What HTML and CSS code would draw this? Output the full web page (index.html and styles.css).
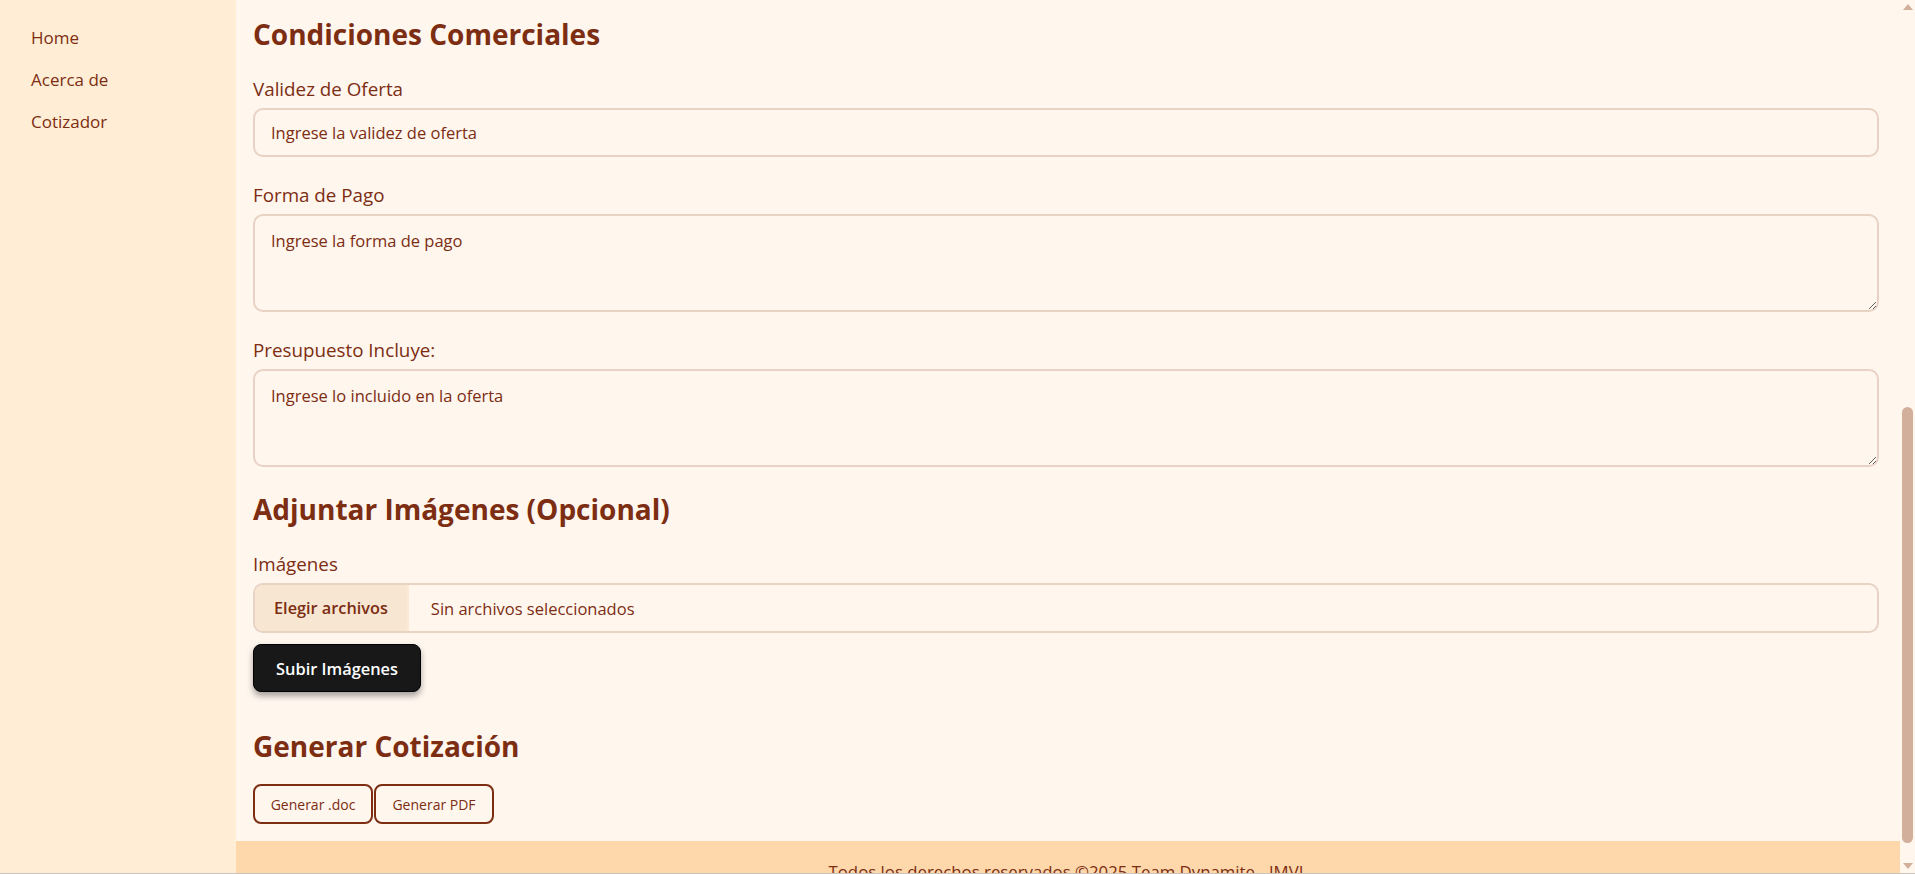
FILE: index.html
```html
<!DOCTYPE html>
<html lang="es">
<head>
<meta charset="utf-8">
<title>Cotizador</title>
<link rel="stylesheet" href="styles.css">
</head>
<body>
<div class="layout">
  <aside class="sidebar">
    <nav class="nav">
      <a class="nav-link" href="#">Home</a>
      <a class="nav-link" href="#">Acerca de</a>
      <a class="nav-link" href="#">Cotizador</a>
    </nav>
  </aside>
  <div class="page">
    <main class="main">
      <h2 class="section-title">Condiciones Comerciales</h2>
      <div class="field">
        <label class="field-label" for="validez">Validez de Oferta</label>
        <input class="input" id="validez" type="text" placeholder="Ingrese la validez de oferta">
      </div>
      <div class="field">
        <label class="field-label" for="pago">Forma de Pago</label>
        <textarea class="input textarea" id="pago" placeholder="Ingrese la forma de pago"></textarea>
      </div>
      <div class="field">
        <label class="field-label" for="incluye">Presupuesto Incluye:</label>
        <textarea class="input textarea" id="incluye" placeholder="Ingrese lo incluido en la oferta"></textarea>
      </div>

      <h2 class="section-title">Adjuntar Imágenes (Opcional)</h2>
      <div class="upload">
        <span class="field-label">Imágenes</span>
        <div class="file-field">
          <label class="file-btn" for="imagenes">Elegir archivos</label>
          <span class="file-name">Sin archivos seleccionados</span>
          <input class="file-hidden" id="imagenes" type="file" multiple>
        </div>
        <button class="btn-dark" type="button">Subir Imágenes</button>
      </div>

      <h2 class="section-title">Generar Cotización</h2>
      <div class="actions">
        <button class="btn-outline" type="button">Generar .doc</button>
        <button class="btn-outline" type="button">Generar PDF</button>
      </div>
    </main>
    <footer class="footer">
      <p class="footer-text">Todos los derechos reservados ©2025 Team Dynamite - JMVL</p>
    </footer>
  </div>
  <div class="rail" aria-hidden="true">
    <svg class="rail-arrow" width="10" height="6" viewBox="0 0 10 6"><path d="M5 0L10 6H0z"/></svg>
    <div class="rail-space"></div>
    <div class="rail-thumb"></div>
    <svg class="rail-arrow" width="10" height="6" viewBox="0 0 10 6"><path d="M0 0H10L5 6z"/></svg>
  </div>
</div>
</body>
</html>
```
FILE: styles.css
```css
* {
  box-sizing: border-box;
}
html,
body {
  height: 100%;
}
body {
  margin: 0;
  font-family: "Segoe UI", "Open Sans", "Noto Sans", sans-serif;
  color: #7c2d12;
  background: #fff6ee;
  overflow: hidden;
}
.layout {
  display: flex;
  height: 100vh;
  border-bottom: 1px solid #c9c4c0;
}
.sidebar {
  flex: 0 0 236px;
  background: #ffedd5;
  padding: 17px 0;
}
.nav {
  display: flex;
  flex-direction: column;
}
.nav-link {
  display: block;
  padding: 9px 31px;
  font-size: 17px;
  line-height: 24px;
  color: #7c2d12;
  text-decoration: none;
}
.page {
  flex: 1;
  display: flex;
  flex-direction: column;
  min-width: 0;
  overflow: hidden;
}
.main {
  flex: 1 0 auto;
  padding: 16px 21px 17px 17px;
  background: #fff6ee;
}
.section-title {
  margin: 0 0 23px;
  font-size: 28px;
  line-height: 36px;
  font-weight: 700;
  color: #7c2d12;
}
.field {
  margin-bottom: 24px;
}
.field-label {
  display: block;
  font-size: 18.8px;
  line-height: 28px;
  margin-bottom: 5px;
  color: #7c2d12;
}
.input {
  display: block;
  width: 100%;
  height: 49px;
  padding: 11px 16px;
  border: 2px solid #e8d2c4;
  border-radius: 10px;
  background: #fff6ee;
  font: inherit;
  font-size: 16.5px;
  line-height: 23px;
  color: #7c2d12;
  outline: none;
}
.input::placeholder {
  color: #7c2d12;
  opacity: 1;
}
.textarea {
  height: 98px;
  padding-top: 13px;
  resize: vertical;
}
.upload {
  margin-bottom: 36px;
}
.file-field {
  display: flex;
  align-items: stretch;
  height: 50px;
  border: 2px solid #e8d2c4;
  border-radius: 10px;
  overflow: hidden;
  margin-bottom: 11px;
}
.file-btn {
  display: flex;
  align-items: center;
  padding: 0 19px;
  background: #f7e6d2;
  border-right: 2px solid #fde9d3;
  font-size: 16.3px;
  font-weight: 600;
  color: #7c2d12;
  cursor: pointer;
}
.file-name {
  display: flex;
  align-items: center;
  padding-left: 22px;
  font-size: 16.5px;
  color: #7c2d12;
}
.file-hidden {
  display: none;
}
.btn-dark {
  display: block;
  height: 48px;
  padding: 0 22px;
  border: 1px solid #000;
  border-radius: 8px;
  background: #181818;
  color: #fff;
  font: inherit;
  font-size: 16.4px;
  font-weight: 600;
  box-shadow: 0 4px 6px rgba(0, 0, 0, 0.35);
  cursor: pointer;
}
.actions {
  display: flex;
  gap: 1px;
}
.section-title + .actions {
  margin-top: -3px;
}
.btn-outline {
  width: 120px;
  height: 40px;
  padding: 0;
  border: 2px solid #7c2d12;
  border-radius: 8px;
  background: transparent;
  color: #7c2d12;
  font: inherit;
  font-size: 14px;
  font-weight: 500;
  cursor: pointer;
}
.footer {
  flex: 0 0 auto;
  background: #fed7aa;
  padding: 19px 16px 24px;
}
.footer-text {
  margin: 0;
  text-align: center;
  font-size: 16.8px;
  line-height: 24px;
  color: #7c2d12;
}
.rail {
  flex: 0 0 15px;
  display: flex;
  flex-direction: column;
  align-items: center;
  background: #fff6ee;
  padding: 4px 0 4px;
}
.rail-arrow {
  display: block;
  flex: 0 0 auto;
  fill: #d2af9b;
}
.rail-space {
  flex: 1;
}
.rail-thumb {
  flex: 0 0 436px;
  width: 11px;
  border-radius: 6px;
  background: #d2af9b;
  margin-bottom: 20px;
}
```
